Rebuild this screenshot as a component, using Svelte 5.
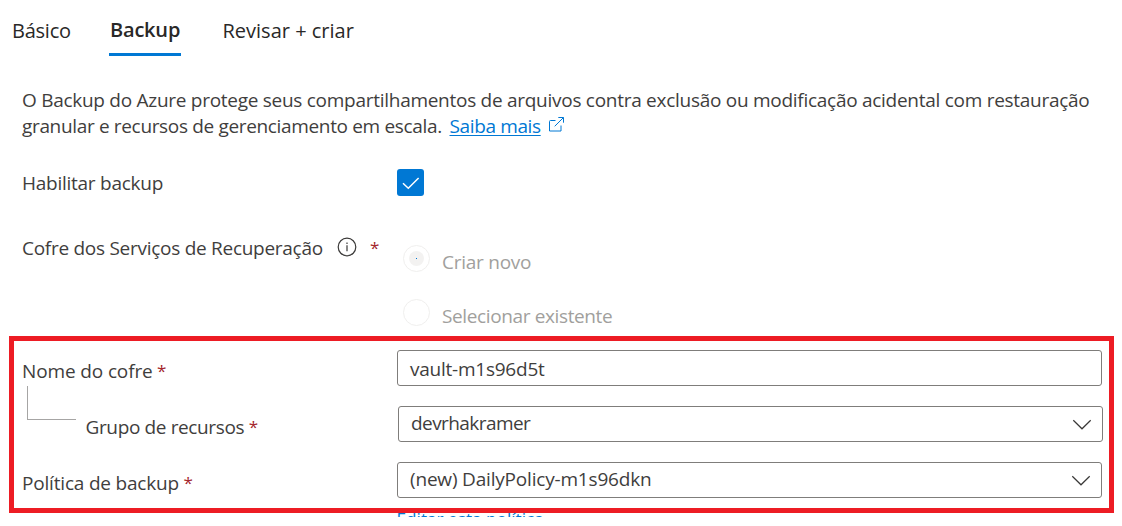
<script>
  const tabs = [
    { label: 'Básico', cls: 'basic' },
    { label: 'Backup', cls: 'active' },
    { label: 'Revisar + criar', cls: 'review' }
  ];
</script>

<main class="page">
  <nav class="tabs">
    {#each tabs as tab}
      <span class="tab {tab.cls}">{tab.label}</span>
    {/each}
  </nav>

  <p class="intro">
    <span class="line first">O Backup do Azure protege seus compartilhamentos de arquivos contra exclusão ou modificação acidental com restauração</span>
    <span class="line second"><span class="rest">granular e recursos de gerenciamento em escala.</span><span class="link">Saiba mais</span><svg class="external" width="17" height="17" viewBox="0 0 17 17"><path d="M7.5 4.5h-5q-1 0-1 1v9.5h11.5V9.5M6.7 10.3L15.4 1.6M10.3 1.5h5.2v5.2" /></svg></span>
  </p>

  <div class="row enable">
    <span class="label habilitar">Habilitar backup</span>
    <span class="checkbox"><svg width="27" height="27" viewBox="0 0 27 27"><path d="M6 14.2l5.3 5.1L21.6 9" /></svg></span>
  </div>

  <div class="row vault">
    <span class="label cofre"><span class="cofre-text">Cofre dos Serviços de Recuperação</span>
      <svg class="info" width="20" height="20" viewBox="0 0 20 20"><circle cx="10" cy="10" r="8.8" /><path d="M10 8.2v6.1M10 5.4v1.5" /></svg>
      <span class="star">*</span></span>
    <div class="radios">
      <div class="radio"><span class="dot checked"></span><span class="criar">Criar novo</span></div>
      <div class="radio"><span class="dot"></span><span class="selecionar">Selecionar existente</span></div>
    </div>
  </div>

  <section class="fields">
    <div class="field">
      <span class="label nome">Nome do cofre<span class="star">*</span></span>
      <div class="input vault-name">vault-m1s96d5t</div>
    </div>
    <div class="field nested">
      <span class="branch"></span>
      <span class="label grupo">Grupo de recursos<span class="star">*</span></span>
      <div class="input select group">devrhakramer<svg class="chevron" width="20" height="12" viewBox="0 0 20 12"><path d="M1.3 1.3L10 9.8l8.7-8.5" /></svg></div>
    </div>
    <div class="field">
      <span class="label politica">Política de backup<span class="star">*</span></span>
      <div class="input select policy">(new) DailyPolicy-m1s96dkn<svg class="chevron" width="20" height="12" viewBox="0 0 20 12"><path d="M1.3 1.3L10 9.8l8.7-8.5" /></svg></div>
    </div>
  </section>
  <div class="edit"><span>Editar esta política</span></div>
</main>

<style>
  :global(body) { background: #fff; }
  .page {
    box-sizing: border-box;
    width: 1122px;
    height: 526px;
    overflow: hidden;
    font: 19px/26px "Open Sans", "Noto Sans", sans-serif;
    color: #3f3e3d;
    white-space: nowrap;
  }
  .tabs {
    display: flex;
    height: 56px;
    box-sizing: border-box;
    padding-left: 12px;
    font-size: 20px;
    color: #292827;
  }
  .tab { box-sizing: border-box; height: 56px; padding-top: 18px; }
  .basic { width: 97px; letter-spacing: -0.24px; }
  .active {
    width: 72px;
    padding: 17px 0 0 1px;
    border-bottom: 3px solid #0078d4;
    font-weight: 600;
    letter-spacing: -0.2px;
  }
  .review { margin-left: 41.5px; }
  .intro { margin: 0; padding: 31px 0 0 22px; }
  .line { display: flex; height: 26px; }
  .first { letter-spacing: -0.275px; }
  .rest { width: 427.5px; letter-spacing: -0.34px; }
  .link {
    color: #0078d4;
    letter-spacing: -0.37px;
    text-decoration: underline;
    text-decoration-thickness: 1px;
    text-underline-offset: 2px;
  }
  .external { margin: 3px 0 0 7px; fill: none; stroke: #0078d4; stroke-width: 1; }
  .row { display: flex; padding-left: 22px; }
  .label { display: flex; width: 375px; }
  .enable { margin-top: 30px; height: 27px; }
  .enable .label { padding-top: 1px; }
  .habilitar { letter-spacing: -0.26px; }
  .checkbox { width: 27px; height: 27px; border-radius: 3px; background: #0078d4; }
  .checkbox svg { display: block; fill: none; stroke: #fff; stroke-width: 1.5; }
  .vault { height: 140px; }
  .cofre { padding-top: 39px; }
  .cofre-text { width: 315px; letter-spacing: -0.275px; }
  .info { margin-top: 2px; fill: none; stroke: #3a3938; stroke-width: 1.2; }
  .star { margin-left: 4.5px; color: #a4262c; font-size: 17px; letter-spacing: 0; }
  .cofre .star { margin-left: 13px; }
  .radios { padding: 49px 0 0 6px; color: #a19f9d; }
  .radio { display: flex; height: 54px; }
  .dot {
    display: flex;
    align-items: center;
    justify-content: center;
    box-sizing: border-box;
    width: 27px;
    height: 27px;
    margin-right: 12px;
    border: 1px solid #f0efee;
    border-radius: 50%;
  }
  .checked::before {
    content: "";
    width: 15px;
    height: 15px;
    border-radius: 50%;
    background: radial-gradient(circle, #0078d4 0 0.7px, #f3f2f1 0.8px);
  }
  .criar { padding-top: 4px; letter-spacing: -0.25px; }
  .selecionar { padding-top: 4px; letter-spacing: -0.375px; }
  .fields {
    box-sizing: border-box;
    width: 1105px;
    height: 177px;
    margin-left: 9px;
    border: 5px solid #ed1c24;
    padding: 9px 0 0 8px;
  }
  .field { display: flex; height: 56px; }
  .field .label { padding-top: 8px; }
  .nome { letter-spacing: -0.13px; }
  .branch {
    box-sizing: border-box;
    width: 49px;
    height: 34px;
    margin: -20px 9.5px 0 5px;
    border: solid #a6a5a4;
    border-width: 0 0 1px 1px;
  }
  .nested .label { width: 312.5px; }
  .grupo { letter-spacing: -0.368px; }
  .politica { letter-spacing: -0.19px; }
  .input {
    display: flex;
    justify-content: space-between;
    box-sizing: border-box;
    width: 705px;
    height: 36px;
    padding: 5px 10px 0 12px;
    border: 1px solid #7f7d7b;
    border-radius: 3px;
  }
  .select { padding-top: 3px; }
  .vault-name { letter-spacing: -0.239px; }
  .group { letter-spacing: -0.575px; }
  .policy { letter-spacing: -0.187px; }
  .chevron { margin-top: 9px; fill: none; stroke: #3a3938; stroke-width: 1.2; }
  .edit {
    display: flex;
    align-items: flex-end;
    height: 4px;
    overflow: hidden;
    padding-left: 396.5px;
    color: #0078d4;
    font-size: 17.2px;
  }
  .edit span { margin-bottom: -15px; }
</style>
